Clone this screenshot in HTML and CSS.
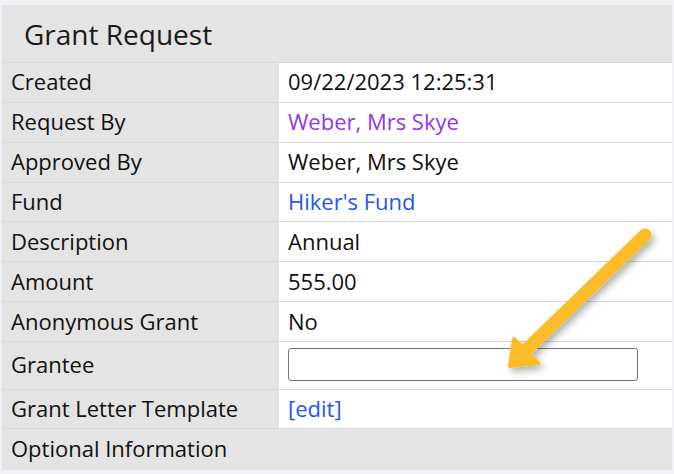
FILE: index.html
```html
<!DOCTYPE html>
<html>
<head>
<meta charset="utf-8">
<link rel="stylesheet" href="styles.css">
</head>
<body>
<div class="page">
  <div class="panel">
    <div class="title">Grant Request</div>
    <div class="row"><div class="label">Created</div><div class="value">09/22/2023 12:25:31</div></div>
    <div class="row"><div class="label">Request By</div><div class="value"><a class="visited" href="#">Weber, Mrs Skye</a></div></div>
    <div class="row"><div class="label">Approved By</div><div class="value">Weber, Mrs Skye</div></div>
    <div class="row"><div class="label">Fund</div><div class="value"><a class="link" href="#">Hiker's Fund</a></div></div>
    <div class="row"><div class="label">Description</div><div class="value">Annual</div></div>
    <div class="row"><div class="label">Amount</div><div class="value">555.00</div></div>
    <div class="row"><div class="label">Anonymous Grant</div><div class="value">No</div></div>
    <div class="row row-tall"><div class="label">Grantee</div><div class="value"><input class="field" type="text"></div></div>
    <div class="row row-short"><div class="label">Grant Letter Template</div><div class="value"><a class="link" href="#">[edit]</a></div></div>
    <div class="section">Optional Information</div>
  </div>
  <svg class="arrow" width="674" height="474" viewBox="0 0 674 474">
    <defs>
      <filter id="sh" x="-20%" y="-20%" width="140%" height="140%">
        <feDropShadow dx="3" dy="4" stdDeviation="3.5" flood-color="#000" flood-opacity="0.3"/>
      </filter>
    </defs>
    <g filter="url(#sh)" fill="#fbbc2b" stroke="#fbbc2b" stroke-linecap="round" stroke-linejoin="round">
      <line x1="645" y1="235" x2="522" y2="354" stroke-width="13"/>
      <polygon points="510,366 514,339 538,363" stroke-width="4"/>
    </g>
  </svg>
</div>
</body>
</html>
```
FILE: styles.css
```css
html, body {
  margin: 0;
  padding: 0;
  background: #f0f0f6;
}
body {
  font-family: "Open Sans", "Noto Sans", sans-serif;
  color: #111;
}
.page {
  position: relative;
  width: 674px;
  height: 474px;
  padding: 5px 2px 0 2px;
  box-sizing: border-box;
}
.panel {
  width: 670px;
  background: #fff;
}
.title {
  height: 57px;
  box-sizing: border-box;
  background: #e4e4e4;
  font-size: 28px;
  line-height: 57px;
  padding: 1px 0 0 22px;
  color: #1a1a1a;
}
.row {
  display: grid;
  grid-template-columns: 277px 1fr;
  height: 39.86px;
  box-sizing: border-box;
  border-top: 1px solid #d9d9d9;
  font-size: 22px;
}
.row-tall { height: 48px; }
.row-short { height: 39px; }
.label {
  background: #e4e4e4;
  display: flex;
  align-items: center;
  padding-left: 9px;
  padding-bottom: 2px;
}
.value {
  display: flex;
  align-items: center;
  padding-left: 9px;
  padding-bottom: 2px;
}
.row-tall .label { padding-bottom: 4px; }
.row-tall .value { padding-bottom: 2px; }
.visited { color: #9036ef; text-decoration: none; }
.link { color: #2953f7; text-decoration: none; }
.field {
  width: 350px;
  height: 33px;
  box-sizing: border-box;
  border: 1px solid #767676;
  border-radius: 3px;
  background: #fff;
  margin: 0;
  padding: 0;
}
.section {
  height: 42px;
  box-sizing: border-box;
  border-top: 1px solid #d9d9d9;
  background: #e4e4e4;
  font-size: 22px;
  display: flex;
  align-items: center;
  padding-left: 9px;
  padding-bottom: 3px;
}
.arrow {
  position: absolute;
  left: 0;
  top: 0;
  pointer-events: none;
}
```
